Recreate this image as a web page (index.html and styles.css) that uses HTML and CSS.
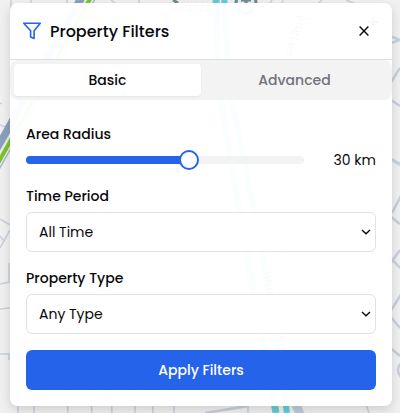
FILE: index.html
```html
<!DOCTYPE html>
<html lang="en">
<head>
<meta charset="utf-8">
<title>Property Filters</title>
<link rel="stylesheet" href="styles.css">
</head>
<body>
<svg class="map" viewBox="0 0 400 413" aria-hidden="true">
  <g fill="none" stroke="#cad2dd" stroke-width="1.600">
    <path d="M11 0V30M31 0V30M67 0v18M111 0l5 4M139 0v25M272 0l-3 5M283 0l-3 8M322 0l-8 8M346 0l10 4"/>
    <path d="M0 103.500h2M0 125l9 3M0 219l10 6M0 248l10-18M0 236l4 5M9 263v19L0 284M0 309l10-1M0 354h9v6"/>
    <path d="M18 350v63M34 390v23M66 380l2 33M89 380l3 33M110 380l2 33M134 380l1 33M151 380l2 33M173 380l1 33M248 390v23M361 390l8 23"/>
    <path d="M150 275l150-25M25 310l100-15M335 125l55 90M338 185l25-43 37 24M330 250l15-35 35 25-18 50-35-20M370 340l10-25M280 100l30 113" opacity=".6"/>
  </g>
  <g fill="none" stroke="#c8d0dc" stroke-width="2.500">
    <path d="M388 35l12 5-12 4M400 68l-10 16M388 98l12 8M388 157l12 7M402 194l-10 19M390 216l10 8M390 264l10-14M390 257l10 11M402 293l-12 19M390 316l10 12M388 346l12 10M401 363q-6 7 0 14"/>
    <path d="M205 413l43-7"/>
  </g>
  <path d="M82-1L-3 151" stroke="#8ba0bd" stroke-width="10"/>
  <path d="M87-1L-3 159" stroke="#e8ecea" stroke-width="3"/>
  <path d="M90-1L-3 165" stroke="#79c52b" stroke-width="4"/>
  <path d="M95-1L-3 173" stroke="#a6b8cd" stroke-width="1.500"/>
  <g fill="none">
    <path d="M216-5l2 90 25 150 33 178" stroke="#8bc7a0" stroke-width="7"/>
    <path d="M216-5l2 90 25 150 33 178" stroke="#65cbe0" stroke-width="5"/>
    <path d="M224-5l5 90 30 150 28 178" stroke="#65cbe0" stroke-width="6"/>
  </g>
  <path d="M284 374l17 43" stroke="#c2cbd9" stroke-width="9"/>
  <circle cx="246" cy="3" r="10" fill="#e8eded" stroke="#718a91" stroke-width="3"/>
  <path d="M241 0h10M246-2v10M173 0l5 3" stroke="#718a91" stroke-width="3"/>
  <path d="M373 17v10M368 22h10" stroke="#222" stroke-width="2"/>
  <g class="map-label">
    <text x="170" y="12">วอนุวงศ</text>
    <text transform="translate(291 57) rotate(-70)">ผลาสินธุ์</text>
    <text transform="translate(274 294) rotate(-96)">ถนน</text>
    <text transform="translate(286 350) rotate(-96)">ถนน</text>
  </g>
</svg>
<main class="panel">
  <header class="header">
    <svg class="funnel" viewBox="0 0 20 20"><path d="M1.700 2.200h16.600l-6.200 7.500v7.800l-3.500-1.600V9.700z"/></svg>
    <h1>Property Filters</h1>
    <button class="close" aria-label="Close"><svg viewBox="0 0 12 12"><path d="M1.600 1.600l8.800 8.800M10.400 1.600l-8.800 8.800"/></svg></button>
  </header>
  <nav class="tabs">
    <button class="tab active">Basic</button>
    <button class="tab">Advanced</button>
  </nav>
  <section class="content">
    <div class="label">Area Radius</div>
    <div class="radius">
      <div class="track"><div class="fill"></div><div class="thumb"></div></div>
      <span>30 km</span>
    </div>
    <div class="label">Time Period</div>
    <div class="select"><span>All Time</span><svg viewBox="0 0 10 6"><path d="M1 1l4 3.800L9 1"/></svg></div>
    <div class="label">Property Type</div>
    <div class="select"><span>Any Type</span><svg viewBox="0 0 10 6"><path d="M1 1l4 3.800L9 1"/></svg></div>
    <button class="apply">Apply Filters</button>
  </section>
</main>
</body>
</html>
```
FILE: styles.css
```css
* { box-sizing: border-box; }
body {
  margin: 0;
  width: 400px;
  height: 413px;
  padding: 3px 8px 7px 10px;
  overflow: hidden;
  background: #f1f1f1;
  color: #09090b;
  font: 400 14px/20px Poppins, Inter, sans-serif;
  font-feature-settings: "cv11", "ss03";
}
button { border: 0; padding: 0; background: transparent; font: inherit; font-feature-settings: inherit; color: inherit; }
span { white-space: nowrap; }
.map { position: absolute; left: 0; top: 0; width: 400px; height: 413px; }
.map-label { font: 12px "Noto Sans", sans-serif; fill: #4b5563; }
.panel {
  position: relative;
  width: 382px;
  height: 403px;
  border-radius: 8px;
  background: rgba(255, 255, 255, .97);
  box-shadow: 0 4px 12px rgba(0, 0, 0, .15);
}
.header { display: flex; align-items: center; height: 57px; padding: 0 22px 0 12px; border-bottom: 1px solid #dedee0; }
.funnel { width: 20px; height: 20px; margin-right: 8px; fill: none; stroke: #2563eb; stroke-width: 1.6; stroke-linejoin: round; }
h1 { margin: 0; padding-top: 1px; font-size: 16px; font-weight: 500; line-height: 24px; }
.close { display: flex; margin-left: auto; }
.close svg { width: 12px; height: 12px; fill: none; stroke: #09090b; stroke-width: 1.4; }
.tabs { display: grid; grid-template-columns: 187px 1fr; height: 40px; padding: 4px; border-radius: 8px; background: #f3f3f3; }
.tab { color: #71717a; font-weight: 500; border-radius: 4px; }
.tab.active { color: #09090b; background: #fff; box-shadow: 0 1px 2px rgba(0, 0, 0, .06); }
.content { padding: 24px 16px 16px; }
.label { height: 20px; font-weight: 500; }
.radius { display: flex; align-items: center; justify-content: space-between; height: 20px; margin: 6px 0 16px; }
.track { display: flex; align-items: center; width: 278px; height: 8px; border-radius: 4px; background: #f3f3f3; }
.fill { width: 163px; height: 8px; border-radius: 4px 0 0 4px; background: #2563eb; }
.thumb { width: 20px; height: 20px; margin-left: -10px; border: 2px solid #2563eb; border-radius: 50%; background: #fff; }
.select { display: flex; align-items: center; justify-content: space-between; height: 40px; margin: 6px 0 16px; padding: 0 4px 0 12px; border: 1px solid #e1e1e4; border-radius: 6px; background: #fff; }
.select svg { width: 10px; height: 6px; fill: none; stroke: #09090b; stroke-width: 1.4; }
.apply { display: block; width: 350px; height: 40px; border-radius: 6px; background: #2563eb; color: #fff; font-weight: 500; }
```
